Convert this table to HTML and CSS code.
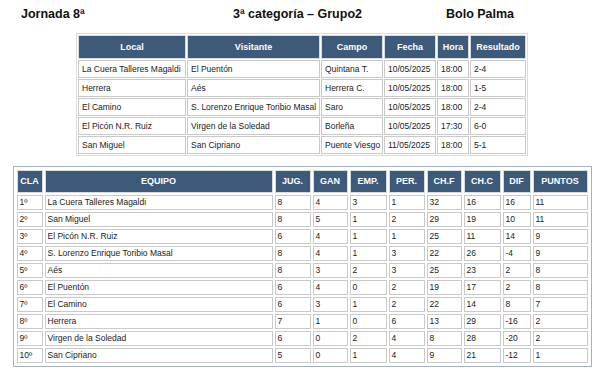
FILE: index.html
```html
<!DOCTYPE html>
<html lang="es">
<head>
<meta charset="utf-8">
<title>Jornada 8ª</title>
<link rel="stylesheet" href="styles.css">
</head>
<body>
<div class="titles">
  <span>Jornada 8ª</span>
  <span>3ª categoría – Grupo2</span>
  <span>Bolo Palma</span>
</div>

<table class="games">
  <colgroup>
    <col class="c-local"><col class="c-vis"><col class="c-campo"><col class="c-fecha"><col class="c-hora"><col class="c-res">
  </colgroup>
  <thead>
    <tr><th>Local</th><th>Visitante</th><th>Campo</th><th>Fecha</th><th>Hora</th><th>Resultado</th></tr>
  </thead>
  <tbody>
    <tr><td>La Cuera Talleres Magaldi</td><td>El Puentón</td><td>Quintana T.</td><td>10/05/2025</td><td>18:00</td><td>2-4</td></tr>
    <tr><td>Herrera</td><td>Aés</td><td>Herrera C.</td><td>10/05/2025</td><td>18:00</td><td>1-5</td></tr>
    <tr><td>El Camino</td><td>S. Lorenzo Enrique Toribio Masal</td><td>Saro</td><td>10/05/2025</td><td>18:00</td><td>2-4</td></tr>
    <tr><td>El Picón N.R. Ruiz</td><td>Virgen de la Soledad</td><td>Borleña</td><td>10/05/2025</td><td>17:30</td><td>6-0</td></tr>
    <tr><td>San Miguel</td><td>San Cipriano</td><td>Puente Viesgo</td><td>11/05/2025</td><td>18:00</td><td>5-1</td></tr>
  </tbody>
</table>

<div class="standings-box">
<table class="standings">
  <colgroup>
    <col class="s-cla"><col class="s-eq"><col class="s-jug"><col class="s-gan"><col class="s-emp"><col class="s-per"><col class="s-chf"><col class="s-chc"><col class="s-dif"><col class="s-pts">
  </colgroup>
  <thead>
    <tr><th>CLA</th><th>EQUIPO</th><th>JUG.</th><th>GAN</th><th>EMP.</th><th>PER.</th><th>CH.F</th><th>CH.C</th><th>DIF</th><th>PUNTOS</th></tr>
  </thead>
  <tbody>
    <tr><td>1º</td><td>La Cuera Talleres Magaldi</td><td>8</td><td>4</td><td>3</td><td>1</td><td>32</td><td>16</td><td>16</td><td>11</td></tr>
    <tr><td>2º</td><td>San Miguel</td><td>8</td><td>5</td><td>1</td><td>2</td><td>29</td><td>19</td><td>10</td><td>11</td></tr>
    <tr><td>3º</td><td>El Picón N.R. Ruiz</td><td>6</td><td>4</td><td>1</td><td>1</td><td>25</td><td>11</td><td>14</td><td>9</td></tr>
    <tr><td>4º</td><td>S. Lorenzo Enrique Toribio Masal</td><td>8</td><td>4</td><td>1</td><td>3</td><td>22</td><td>26</td><td>-4</td><td>9</td></tr>
    <tr><td>5º</td><td>Aés</td><td>8</td><td>3</td><td>2</td><td>3</td><td>25</td><td>23</td><td>2</td><td>8</td></tr>
    <tr><td>6º</td><td>El Puentón</td><td>6</td><td>4</td><td>0</td><td>2</td><td>19</td><td>17</td><td>2</td><td>8</td></tr>
    <tr><td>7º</td><td>El Camino</td><td>6</td><td>3</td><td>1</td><td>2</td><td>22</td><td>14</td><td>8</td><td>7</td></tr>
    <tr><td>8º</td><td>Herrera</td><td>7</td><td>1</td><td>0</td><td>6</td><td>13</td><td>29</td><td>-16</td><td>2</td></tr>
    <tr><td>9º</td><td>Virgen de la Soledad</td><td>6</td><td>0</td><td>2</td><td>4</td><td>8</td><td>28</td><td>-20</td><td>2</td></tr>
    <tr><td>10º</td><td>San Cipriano</td><td>5</td><td>0</td><td>1</td><td>4</td><td>9</td><td>21</td><td>-12</td><td>1</td></tr>
  </tbody>
</table>
</div>
</body>
</html>
```

FILE: styles.css
```css
html, body {
  margin: 0;
  padding: 0;
  background: #ffffff;
}

body {
  font-family: "Liberation Sans", Arial, sans-serif;
  color: #1a1a1a;
}

.titles {
  display: grid;
  grid-template-columns: 212px 213px auto;
  padding-left: 21px;
  margin-top: 7px;
  font-weight: 700;
  font-size: 12.5px;
  line-height: 15px;
  color: #111111;
}

table {
  border-collapse: separate;
  table-layout: fixed;
}

th {
  background: #3e5a7a;
  color: #ffffff;
  font-weight: 700;
  font-size: 9px;
  text-align: center;
  padding: 0 2px;
  border: 1px solid #d6dbe1;
  white-space: nowrap;
}

td {
  font-size: 8.5px;
  text-align: left;
  padding: 0 2px 0 3px;
  border: 1px solid #c9c9c9;
  white-space: nowrap;
  overflow: hidden;
  color: #1a1a1a;
}

/* games table */
.games {
  margin: 11px auto 0;
  width: 452px;
  border-spacing: 1px;
  border: 1px solid #dcdcdc;
}

.games th { line-height: 22px; }
.games td { line-height: 16px; }

.c-local { width: 108px; }
.c-vis { width: 133px; }
.c-campo { width: 62px; }
.c-fecha { width: 52px; }
.c-hora { width: 32px; }
.c-res { width: 56px; }

/* standings table */
.standings-box {
  width: 579px;
  box-sizing: border-box;
  margin: 10px auto 0;
  border: 1px solid #a3b1c2;
  padding: 1px;
}

.standings {
  width: 575px;
  border-spacing: 2px;
}

.standings th { line-height: 21px; }
.standings td { line-height: 13px; padding-left: 2px; }

.s-cla { width: 26px; }
.s-eq { width: 228px; }
.s-jug { width: 36px; }
.s-gan { width: 35px; }
.s-emp { width: 37px; }
.s-per { width: 36px; }
.s-chf { width: 35px; }
.s-chc { width: 37px; }
.s-dif { width: 28px; }
.s-pts { width: 55px; }
```
